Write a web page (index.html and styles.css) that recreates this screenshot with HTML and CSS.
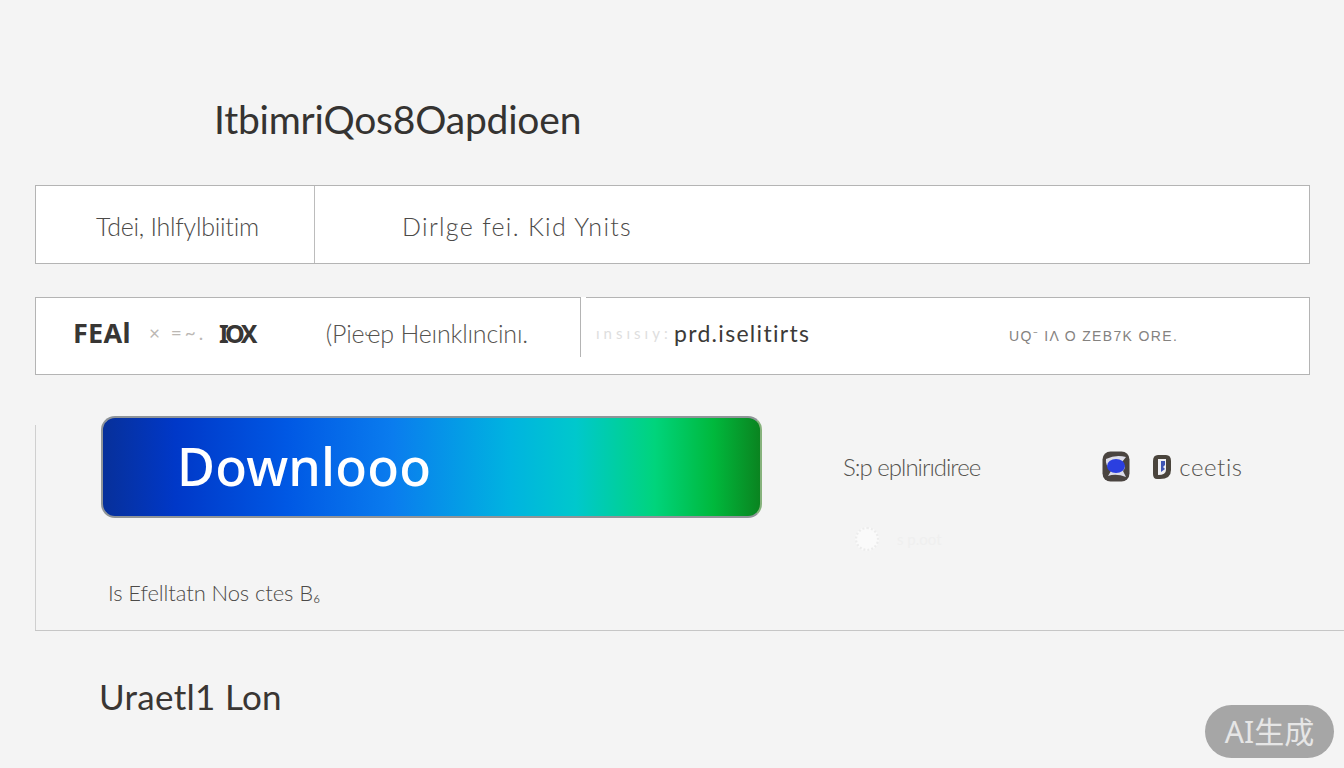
FILE: index.html
```html
<!DOCTYPE html>
<html>
<head>
  <title>Download Options</title>
  <meta name="viewport" content="width=device-width, initial-scale=1.0">
  <link rel="stylesheet" href="styles.css">
</head>
<body>
  <h1 class="page-title">ItbimriQos8Oapdioen</h1>

  <div class="info-row">
    <div class="info-label">Tdei, Ihlfylbiitim</div>
    <div class="info-value">Dirlge fei. Kid Ynits</div>
  </div>

  <div class="feature-row">
    <div class="feature-main">
      <strong class="feature-tag">FEAl</strong>
      <span class="feature-faint">× =~.</span>
      <strong class="feature-tag feature-tag-x">IOX</strong>
      <span class="feature-name">(Pieҽp Heınklıncinı.</span>
    </div>
    <div class="feature-side">
      <span class="side-fade">ınsısıy:</span><span class="side-strong">prd.iselitirts</span>
      <span class="side-code">UQ⁻ IΛ O  ZEB7K ORE.</span>
    </div>
  </div>

  <section class="download">
    <div class="download-top">
      <button class="download-btn">Downlooo</button>
      <div class="download-meta">
        <div class="meta-line">
          <span class="meta-text meta-text-first">S:p eplnirıdiree</span>
          <span class="meta-icons">
            <svg class="icon-chat" width="28" height="31" viewBox="0 0 28 31">
              <rect x="0.5" y="0.5" width="27" height="30" rx="8" fill="#4a4440"/>
              <path d="M4 8 Q14 3 24 6 L20 11 Q25 16 21 20 L24 26 Q14 22 6 25 L9 20 Q3 14 4 8Z" fill="#dcdce8"/>
              <ellipse cx="14" cy="15" rx="9" ry="7" fill="#2b3fe0"/>
            </svg>
            <svg class="icon-doc" width="20" height="26" viewBox="0 0 20 26">
              <path d="M6 1 H14 Q19 1 19 7 V16 Q19 25 8 25 H5 Q1 25 1 20 V7 Q1 1 6 1Z" fill="#4a443c"/>
              <path d="M6 5 H14 V16 Q14 21 6 21Z" fill="#f0f0f4"/>
              <path d="M9 7 H13 V11 L11 13 L13 15 L9 18Z" fill="#3f55b5"/>
            </svg>
            <span class="meta-text">ceetis</span>
          </span>
        </div>
        <div class="meta-ghost">
          <span class="ghost-dot"></span>
          <span class="ghost-text">s p.oot</span>
        </div>
      </div>
    </div>
    <p class="download-note">Is Efelltatn Nos ctes B₆</p>
  </section>

  <h2 class="footer-title">Uraetl1 Lon</h2>

  <div class="ai-badge">AI生成</div>
</body>
</html>
```

FILE: styles.css
```css
* {
  margin: 0;
  padding: 0;
  box-sizing: border-box;
}

body {
  height: 768px;
  padding-left: 35px;
  background: #f4f4f4;
  color: #3c3a38;
  font-family: 'Lato', 'Noto Sans', sans-serif;
  position: relative;
  overflow: hidden;
}

.page-title {
  height: 185px;
  padding: 94px 0 0 179px;
  font-size: 39px;
  line-height: 50px;
  font-weight: 400;
  letter-spacing: -0.2px;
  color: #353331;
  white-space: nowrap;
}

.info-row {
  display: flex;
  width: 1275px;
  height: 79px;
  background: #fff;
  border: 1px solid #b4b4b4;
  font-size: 25px;
  font-weight: 300;
  color: #4c4a48;
  margin-bottom: 33px;
}

.info-label {
  width: 279px;
  padding: 25px 0 0 60px;
  border-right: 1px solid #bcbcbc;
  letter-spacing: -0.25px;
  white-space: nowrap;
}

.info-value {
  padding: 25px 0 0 87px;
  letter-spacing: 1.3px;
  white-space: nowrap;
}

.feature-row {
  display: flex;
  width: 1275px;
  height: 78px;
  border: 1px solid #b4b4b4;
  border-top: 0;
  background: #fff;
}

.feature-main {
  display: flex;
  align-items: center;
  width: 545px;
  height: 60px;
  margin-bottom: 17px;
  padding: 10px 0 0 37px;
  border-top: 1px solid #b4b4b4;
  border-right: 1px solid #b4b4b4;
  white-space: nowrap;
}

.feature-tag {
  font-family: 'Noto Sans', sans-serif;
  font-size: 27px;
  font-weight: 700;
  letter-spacing: 0.3px;
  color: #383634;
}

.feature-tag-x {
  font-size: 25px;
  letter-spacing: -3.6px;
}

.feature-faint {
  width: 88px;
  padding-left: 18px;
  font-size: 19px;
  letter-spacing: 3px;
  color: #bcb8b4;
}

.feature-name {
  margin-left: 72px;
  font-size: 25px;
  font-weight: 300;
  letter-spacing: -0.2px;
  color: #55534f;
}

.feature-side {
  flex: 1;
  display: flex;
  align-items: center;
  margin-left: 5px;
  padding: 0 0 6px 10px;
  border-top: 1px solid #b4b4b4;
  white-space: nowrap;
}

.side-fade {
  width: 78px;
  font-size: 15px;
  letter-spacing: 4px;
  color: #dedede;
}

.side-strong {
  width: 335px;
  font-size: 23px;
  letter-spacing: 1.3px;
  color: #3c3a38;
}

.side-code {
  font-family: 'Liberation Sans', sans-serif;
  font-size: 14px;
  letter-spacing: 1.35px;
  color: #85827f;
  padding-top: 4px;
}

.download {
  height: 215px;
  margin-top: 41px;
  padding-left: 66px;
  background:
    linear-gradient(#cfcfcf, #cfcfcf) left 9px / 1px 100% no-repeat;
  border-bottom: 1px solid #c6c6c6;
}

.download-top {
  display: flex;
}

.download-btn {
  width: 661px;
  height: 102px;
  padding: 0 0 4px 74px;
  text-align: left;
  border: 2px solid #8f9498;
  border-right-color: #86b27c;
  border-radius: 14px;
  background: linear-gradient(90deg, #07309a 0%, #0038c8 11%, #0058e4 28%, #0a7cee 44%, #00b4e0 62%, #00c8cc 72%, #00d47c 84%, #00b83c 93%, #0a8420 100%);
  color: #fff;
  font-family: 'Noto Sans', sans-serif;
  font-size: 52px;
  font-weight: 500;
  letter-spacing: 0.2px;
}

.download-meta {
  flex: 1;
  padding: 35px 0 0 81px;
}

.meta-line {
  display: flex;
  align-items: center;
}

.meta-text {
  font-size: 24px;
  font-weight: 300;
  letter-spacing: 0.6px;
  color: #55534f;
  white-space: nowrap;
}

.meta-text-first {
  letter-spacing: -1px;
}

.meta-icons {
  display: flex;
  align-items: center;
  margin-left: 122px;
}

.icon-doc {
  margin-left: 22px;
  margin-right: 7px;
}

.meta-ghost {
  display: flex;
  align-items: center;
  margin: 45px 0 0 12px;
}

.ghost-dot {
  width: 24px;
  height: 24px;
  border-radius: 50%;
  background: #fafafa;
  border: 2px dotted #ececec;
}

.ghost-text {
  margin-left: 18px;
  font-size: 15px;
  color: #efefef;
}

.download-note {
  margin: 28px 0 0 7px;
  font-size: 22px;
  font-weight: 300;
  letter-spacing: -0.1px;
  color: #4c4a48;
  white-space: nowrap;
}

.footer-title {
  margin: 43px 0 0 64px;
  font-size: 35px;
  line-height: 44px;
  font-weight: 400;
  letter-spacing: 0.3px;
  color: #3a3633;
  white-space: nowrap;
}

.ai-badge {
  position: absolute;
  left: 1205px;
  top: 705px;
  width: 129px;
  height: 53px;
  border-radius: 27px;
  background: #a6a6a6;
  color: #e6e6e6;
  font-family: 'Noto Sans', 'Noto Sans CJK SC', sans-serif;
  font-size: 30px;
  line-height: 53px;
  text-align: center;
}
```
